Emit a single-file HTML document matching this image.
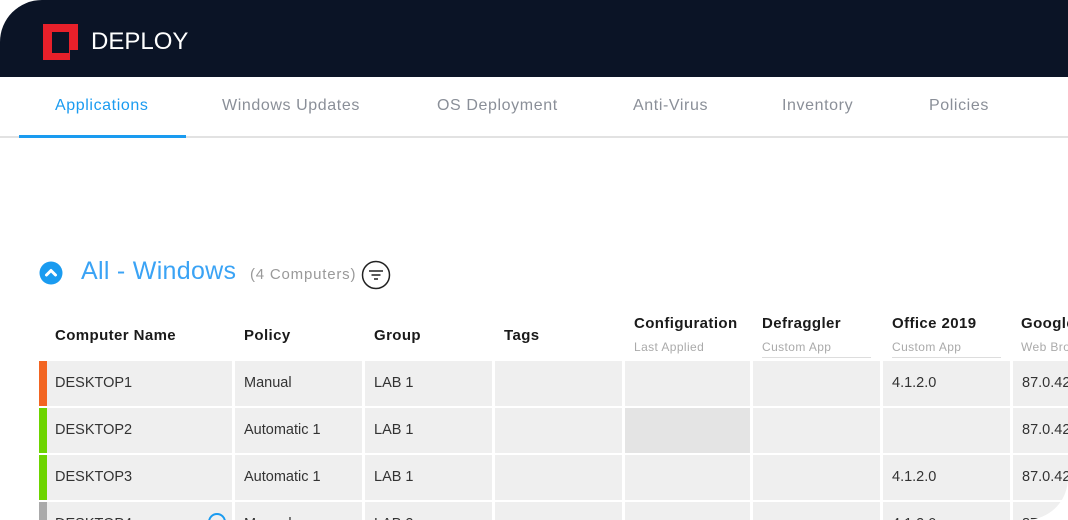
<!DOCTYPE html>
<html><head><style>
*{margin:0;padding:0;box-sizing:border-box}
html,body{width:1068px;height:520px;overflow:hidden}
body{background:#fff;font-family:"Liberation Sans",sans-serif}
#w{position:absolute;left:0;top:0;width:1068px;height:520px;border-radius:42px 0 42px 0;overflow:hidden;background:#fff}
#hd{position:absolute;left:0;top:0;width:1068px;height:77px;background:#0b1426}
#logo{position:absolute;left:43px;top:24px;width:35px;height:36px;background:#e8202a}
#logo i{position:absolute;left:9px;top:8px;width:17px;height:21px;background:#0b1426}
#logo b{position:absolute;right:0;bottom:0;width:8px;height:10px;background:#0b1426}
#title{position:absolute;left:91px;top:28px;color:#fff;font-size:24px}
.tab{position:absolute;top:97px;font-size:16px;color:#8a8f98;letter-spacing:0.6px;white-space:nowrap}
#tb{position:absolute;left:0;top:136px;width:1068px;height:2px;background:#e2e2e2}
#ul{position:absolute;left:19px;top:135px;width:167px;height:3px;background:#1a9bf0}
.c{position:absolute;background:#efefef;font-size:14.5px;color:#333;padding-left:9px;line-height:45px;height:45px;white-space:nowrap;overflow:hidden}
.h{position:absolute;font-size:15px;font-weight:bold;color:#1a1a1a;letter-spacing:0.4px;white-space:nowrap}
.s{position:absolute;font-size:12px;color:#aaa;letter-spacing:0.4px;white-space:nowrap}
.bar{position:absolute;left:39px;width:8px;height:45px}
.r4{height:18px}
</style></head><body><div id="w">
<div id="hd"><div id="logo"><i></i><b></b></div><div id="title">DEPLOY</div></div>
<div class="tab" style="left:55px;color:#1a9bf0">Applications</div>
<div class="tab" style="left:222px">Windows Updates</div>
<div class="tab" style="left:437px">OS Deployment</div>
<div class="tab" style="left:633px">Anti-Virus</div>
<div class="tab" style="left:782px">Inventory</div>
<div class="tab" style="left:929px">Policies</div>
<div id="tb"></div><div id="ul"></div>

<svg style="position:absolute;left:39px;top:261px" width="24" height="24"><circle cx="12" cy="12" r="11.5" fill="#1a9bf0"/><path d="M7.5 14 L12 9.5 L16.5 14" stroke="#fff" stroke-width="3" fill="none" stroke-linecap="round" stroke-linejoin="round"/></svg>
<div style="position:absolute;left:81px;top:257px;font-size:25px;color:#3aa3f5;letter-spacing:0.3px">All - Windows</div>
<div style="position:absolute;left:250px;top:266px;font-size:15px;color:#999;letter-spacing:0.8px">(4 Computers)</div>
<svg style="position:absolute;left:361px;top:260px" width="30" height="30"><circle cx="15" cy="15" r="13.5" stroke="#222" stroke-width="1.5" fill="none"/><path d="M8 11h14M10.5 15h9M13 19h4" stroke="#222" stroke-width="1.6"/></svg>

<div class="h" style="left:55px;top:327px">Computer Name</div>
<div class="h" style="left:244px;top:327px">Policy</div>
<div class="h" style="left:374px;top:327px">Group</div>
<div class="h" style="left:504px;top:327px">Tags</div>
<div class="h" style="left:634px;top:315px">Configuration</div><div class="s" style="left:634px;top:340px">Last Applied</div>
<div class="h" style="left:762px;top:315px">Defraggler</div><div class="s" style="left:762px;top:340px">Custom App</div>
<div style="position:absolute;left:762px;top:357px;width:109px;height:1px;background:#ddd"></div>
<div class="h" style="left:892px;top:315px">Office 2019</div><div class="s" style="left:892px;top:340px">Custom App</div>
<div style="position:absolute;left:892px;top:357px;width:109px;height:1px;background:#ddd"></div>
<div class="h" style="left:1021px;top:315px">Google Chrome</div><div class="s" style="left:1021px;top:340px">Web Browser</div>

<div class="bar" style="top:361px;background:#f26522"></div>
<div class="bar" style="top:408px;background:#6dd400"></div>
<div class="bar" style="top:455px;background:#6dd400"></div>
<div class="bar r4" style="top:502px;background:#aaa"></div>

<div class="c" style="left:47px;top:361px;width:185px;padding-left:8px">DESKTOP1</div>
<div class="c" style="left:235px;top:361px;width:127px">Manual</div>
<div class="c" style="left:365px;top:361px;width:127px">LAB 1</div>
<div class="c" style="left:495px;top:361px;width:127px"></div>
<div class="c" style="left:625px;top:361px;width:125px"></div>
<div class="c" style="left:753px;top:361px;width:127px"></div>
<div class="c" style="left:883px;top:361px;width:127px">4.1.2.0</div>
<div class="c" style="left:1013px;top:361px;width:55px">87.0.4280</div>

<div class="c" style="left:47px;top:408px;width:185px;padding-left:8px">DESKTOP2</div>
<div class="c" style="left:235px;top:408px;width:127px">Automatic 1</div>
<div class="c" style="left:365px;top:408px;width:127px">LAB 1</div>
<div class="c" style="left:495px;top:408px;width:127px"></div>
<div class="c" style="left:625px;top:408px;width:125px;background:#e4e4e4"></div>
<div class="c" style="left:753px;top:408px;width:127px"></div>
<div class="c" style="left:883px;top:408px;width:127px"></div>
<div class="c" style="left:1013px;top:408px;width:55px">87.0.4280</div>

<div class="c" style="left:47px;top:455px;width:185px;padding-left:8px">DESKTOP3</div>
<div class="c" style="left:235px;top:455px;width:127px">Automatic 1</div>
<div class="c" style="left:365px;top:455px;width:127px">LAB 1</div>
<div class="c" style="left:495px;top:455px;width:127px"></div>
<div class="c" style="left:625px;top:455px;width:125px"></div>
<div class="c" style="left:753px;top:455px;width:127px"></div>
<div class="c" style="left:883px;top:455px;width:127px">4.1.2.0</div>
<div class="c" style="left:1013px;top:455px;width:55px">87.0.4280</div>

<div class="c r4" style="left:47px;top:502px;width:185px;padding-left:8px">DESKTOP4</div>
<svg style="position:absolute;left:207px;top:512px" width="20" height="8"><circle cx="10" cy="10" r="8" stroke="#1a9bf0" stroke-width="2" fill="none"/></svg>
<div class="c r4" style="left:235px;top:502px;width:127px">Manual</div>
<div class="c r4" style="left:365px;top:502px;width:127px">LAB 2</div>
<div class="c r4" style="left:495px;top:502px;width:127px"></div>
<div class="c r4" style="left:625px;top:502px;width:125px"></div>
<div class="c r4" style="left:753px;top:502px;width:127px"></div>
<div class="c r4" style="left:883px;top:502px;width:127px">4.1.2.0</div>
<div class="c r4" style="left:1013px;top:502px;width:55px">87.0.4280</div>
</div></body></html>
